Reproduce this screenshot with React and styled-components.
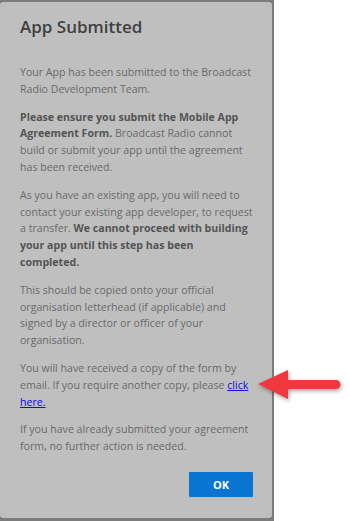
import React from 'react';
import styled, { createGlobalStyle } from 'styled-components';

const GlobalStyle = createGlobalStyle`
  html, body {
    margin: 0;
    padding: 0;
    background: #ffffff;
  }
`;

const Page = styled.div`
  position: relative;
  width: 350px;
  height: 521px;
  overflow: hidden;
  display: flex;
  align-items: flex-start;
`;

const Backdrop = styled.div`
  width: 274px;
  height: 521px;
  box-sizing: border-box;
  background: #7b7b7b;
  padding: 2px 2px 3px 0;
  display: flex;
`;

const Dialog = styled.div`
  flex: 1;
  background: #bfbfbf;
  border-radius: 3px;
  padding: 13px 19px 19px 20px;
  display: flex;
  flex-direction: column;
  font-family: "Open Sans", "Noto Sans", sans-serif;
`;

const Title = styled.h2`
  margin: 0 0 25px;
  font-size: 17px;
  font-weight: 600;
  color: #3f3f3f;
  line-height: 24px;
`;

const Para = styled.p`
  margin: 0 0 11px;
  font-size: 10.6px;
  line-height: 16.8px;
  color: #6a6a6a;

  b {
    font-weight: 700;
    color: #545454;
  }

  a {
    color: #0c0ce0;
    text-decoration: underline;
  }
`;

const Footer = styled.div`
  display: flex;
  justify-content: flex-end;
  margin-top: 6px;
`;

const OkButton = styled.button`
  width: 64px;
  height: 25px;
  padding: 0;
  border: none;
  border-radius: 1px;
  background: #0a74d2;
  color: #ffffff;
  font-family: "Open Sans", "Noto Sans", sans-serif;
  font-weight: 700;
  font-size: 11px;
  cursor: pointer;
`;

const Arrow = styled.svg`
  position: absolute;
  left: 254px;
  top: 362px;
  filter: drop-shadow(1px 2px 2px rgba(0, 0, 0, 0.35));
`;

export default function App() {
  return (
    <Page>
      <GlobalStyle />
      <Backdrop>
        <Dialog>
          <Title>App Submitted</Title>
          <Para>Your App has been submitted to the Broadcast Radio Development Team.</Para>
          <Para>
            <b>Please ensure you submit the Mobile App Agreement Form.</b> Broadcast Radio cannot
            build or submit your app until the agreement has been received.
          </Para>
          <Para>
            As you have an existing app, you will need to contact your existing app developer, to
            request a transfer. <b>We cannot proceed with building your app until this step has been
            completed.</b>
          </Para>
          <Para>
            This should be copied onto your official organisation letterhead (if applicable) and
            signed by a director or officer of your organisation.
          </Para>
          <Para>
            You will have received a copy of the form by email. If you require another copy, please{' '}
            <a href="#">click here.</a>
          </Para>
          <Para>If you have already submitted your agreement form, no further action is needed.</Para>
          <Footer>
            <OkButton>OK</OkButton>
          </Footer>
        </Dialog>
      </Backdrop>
      <Arrow width="92" height="44" viewBox="0 0 92 44">
        <path d="M4 22 L34 8 L34 18 L82 18 A4 4 0 0 1 82 27 L34 27 L34 37 Z" fill="#f0393f" />
      </Arrow>
    </Page>
  );
}
